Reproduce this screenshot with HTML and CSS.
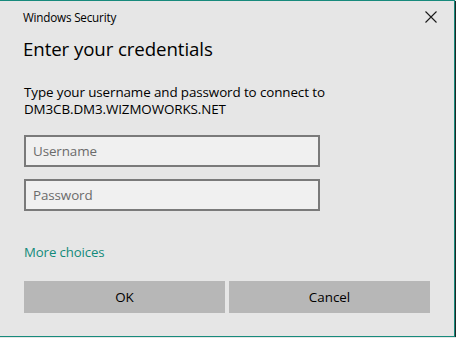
FILE: index.html
```html
<!DOCTYPE html>
<html lang="en">
<head>
<meta charset="utf-8">
<title>Windows Security</title>
<link rel="stylesheet" href="styles.css">
</head>
<body>
<div class="window">
  <div class="titlebar">
    <span class="app-name">Windows Security</span>
    <span class="close" aria-label="Close">
      <svg width="12" height="12" viewBox="0 0 12 12"><path d="M0.5 0.5 L11.5 11.5 M11.5 0.5 L0.5 11.5" stroke="#1a1a1a" stroke-width="1.1" fill="none"/></svg>
    </span>
  </div>
  <h1 class="heading">Enter your credentials</h1>
  <p class="message">Type your username and password to connect to<br>DM3CB.DM3.WIZMOWORKS.NET</p>
  <div class="fields">
    <div class="field">Username</div>
    <div class="field">Password</div>
  </div>
  <a class="more" href="#">More choices</a>
  <div class="buttons">
    <div class="btn">OK</div>
    <div class="btn">Cancel</div>
  </div>
</div>
</body>
</html>
```
FILE: styles.css
```css
html, body {
  margin: 0;
  padding: 0;
  background: #e6e6e6;
  overflow: hidden;
}
body {
  font-family: "Open Sans", "Noto Sans", sans-serif;
  color: #000;
}
.window {
  box-sizing: border-box;
  width: 455px;
  height: 337px;
  background: #e6e6e6;
  border-top: 1px solid #178a7c;
  border-right: 1px solid #178a7c;
  border-bottom: 1px solid #178a7c;
  box-shadow: 1px 1px 0 #1e2a28;
  padding: 0 24px 0 24px;
  display: flex;
  flex-direction: column;
}
.titlebar {
  display: flex;
  justify-content: space-between;
  align-items: center;
  height: 32px;
  margin-left: -1px;
  margin-right: -7px;
}
.app-name {
  font-size: 11.7px;
  letter-spacing: -0.2px;
  color: #000;
}
.close {
  display: flex;
  width: 12px;
  height: 12px;
}
.heading {
  margin: 2px 0 0 -1px;
  font-weight: 400;
  font-size: 18.7px;
  letter-spacing: -0.1px;
  line-height: 28px;
}
.message {
  margin: 21px 0 0 0;
  font-size: 13.4px;
  letter-spacing: -0.1px;
  line-height: 17px;
}
.fields {
  margin-top: 17px;
  display: flex;
  flex-direction: column;
  gap: 12px;
}
.field {
  box-sizing: border-box;
  width: 296px;
  height: 32px;
  border: 2px solid #7a7a7a;
  background: #f0f0f0;
  color: #6b6b6b;
  font-size: 13.4px;
  letter-spacing: -0.1px;
  line-height: 28px;
  padding-left: 7px;
}
.more {
  margin-top: 33px;
  align-self: flex-start;
  color: #138a7a;
  text-decoration: none;
  font-size: 13.2px;
  letter-spacing: -0.1px;
  line-height: 16px;
}
.buttons {
  margin-top: 21px;
  display: flex;
  gap: 4px;
}
.btn {
  width: 201px;
  height: 32px;
  background: #b7b7b7;
  font-size: 13.4px;
  line-height: 32px;
  text-align: center;
}
```
